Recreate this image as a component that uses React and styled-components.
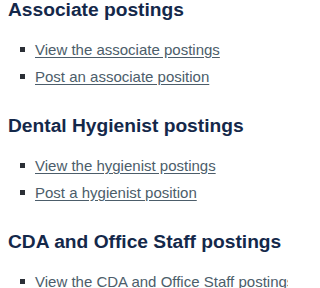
import styled, { createGlobalStyle } from 'styled-components';

const GlobalStyle = createGlobalStyle`
  html, body {
    margin: 0;
    padding: 0;
    background: #ffffff;
  }
  body {
    font-family: "Liberation Sans", Arial, sans-serif;
  }
`;

const Page = styled.div`
  display: flex;
  flex-direction: column;
  gap: 26px;
  padding: 0 0 0 8px;
  width: 288px;
  overflow: hidden;
  box-sizing: border-box;
`;

const Section = styled.section`
  display: flex;
  flex-direction: column;
  gap: 16px;
`;

const Heading = styled.h2`
  margin: 0;
  font-size: 19.2px;
  line-height: 20px;
  font-weight: 700;
  color: #14284a;
  white-space: nowrap;
`;

const List = styled.ul`
  list-style: none;
  margin: 0;
  padding: 0 0 0 12px;
`;

const Item = styled.li`
  display: flex;
  align-items: center;
  gap: 10px;
  font-size: 15px;
  line-height: 27px;
  white-space: nowrap;

  &::before {
    content: '';
    flex: none;
    width: 5px;
    height: 5px;
    background: #2b2f36;
  }
`;

const Link = styled.a`
  color: #4c5d6a;
  text-decoration: underline;
  text-underline-offset: 2px;
`;

const sections = [
  {
    title: 'Associate postings',
    links: ['View the associate postings', 'Post an associate position'],
  },
  {
    title: 'Dental Hygienist postings',
    links: ['View the hygienist postings', 'Post a hygienist position'],
  },
  {
    title: 'CDA and Office Staff postings',
    links: ['View the CDA and Office Staff postings'],
  },
];

export default function App() {
  return (
    <>
      <GlobalStyle />
      <Page>
        {sections.map((s) => (
          <Section key={s.title}>
            <Heading>{s.title}</Heading>
            <List>
              {s.links.map((l) => (
                <Item key={l}>
                  <Link href="#">{l}</Link>
                </Item>
              ))}
            </List>
          </Section>
        ))}
      </Page>
    </>
  );
}
